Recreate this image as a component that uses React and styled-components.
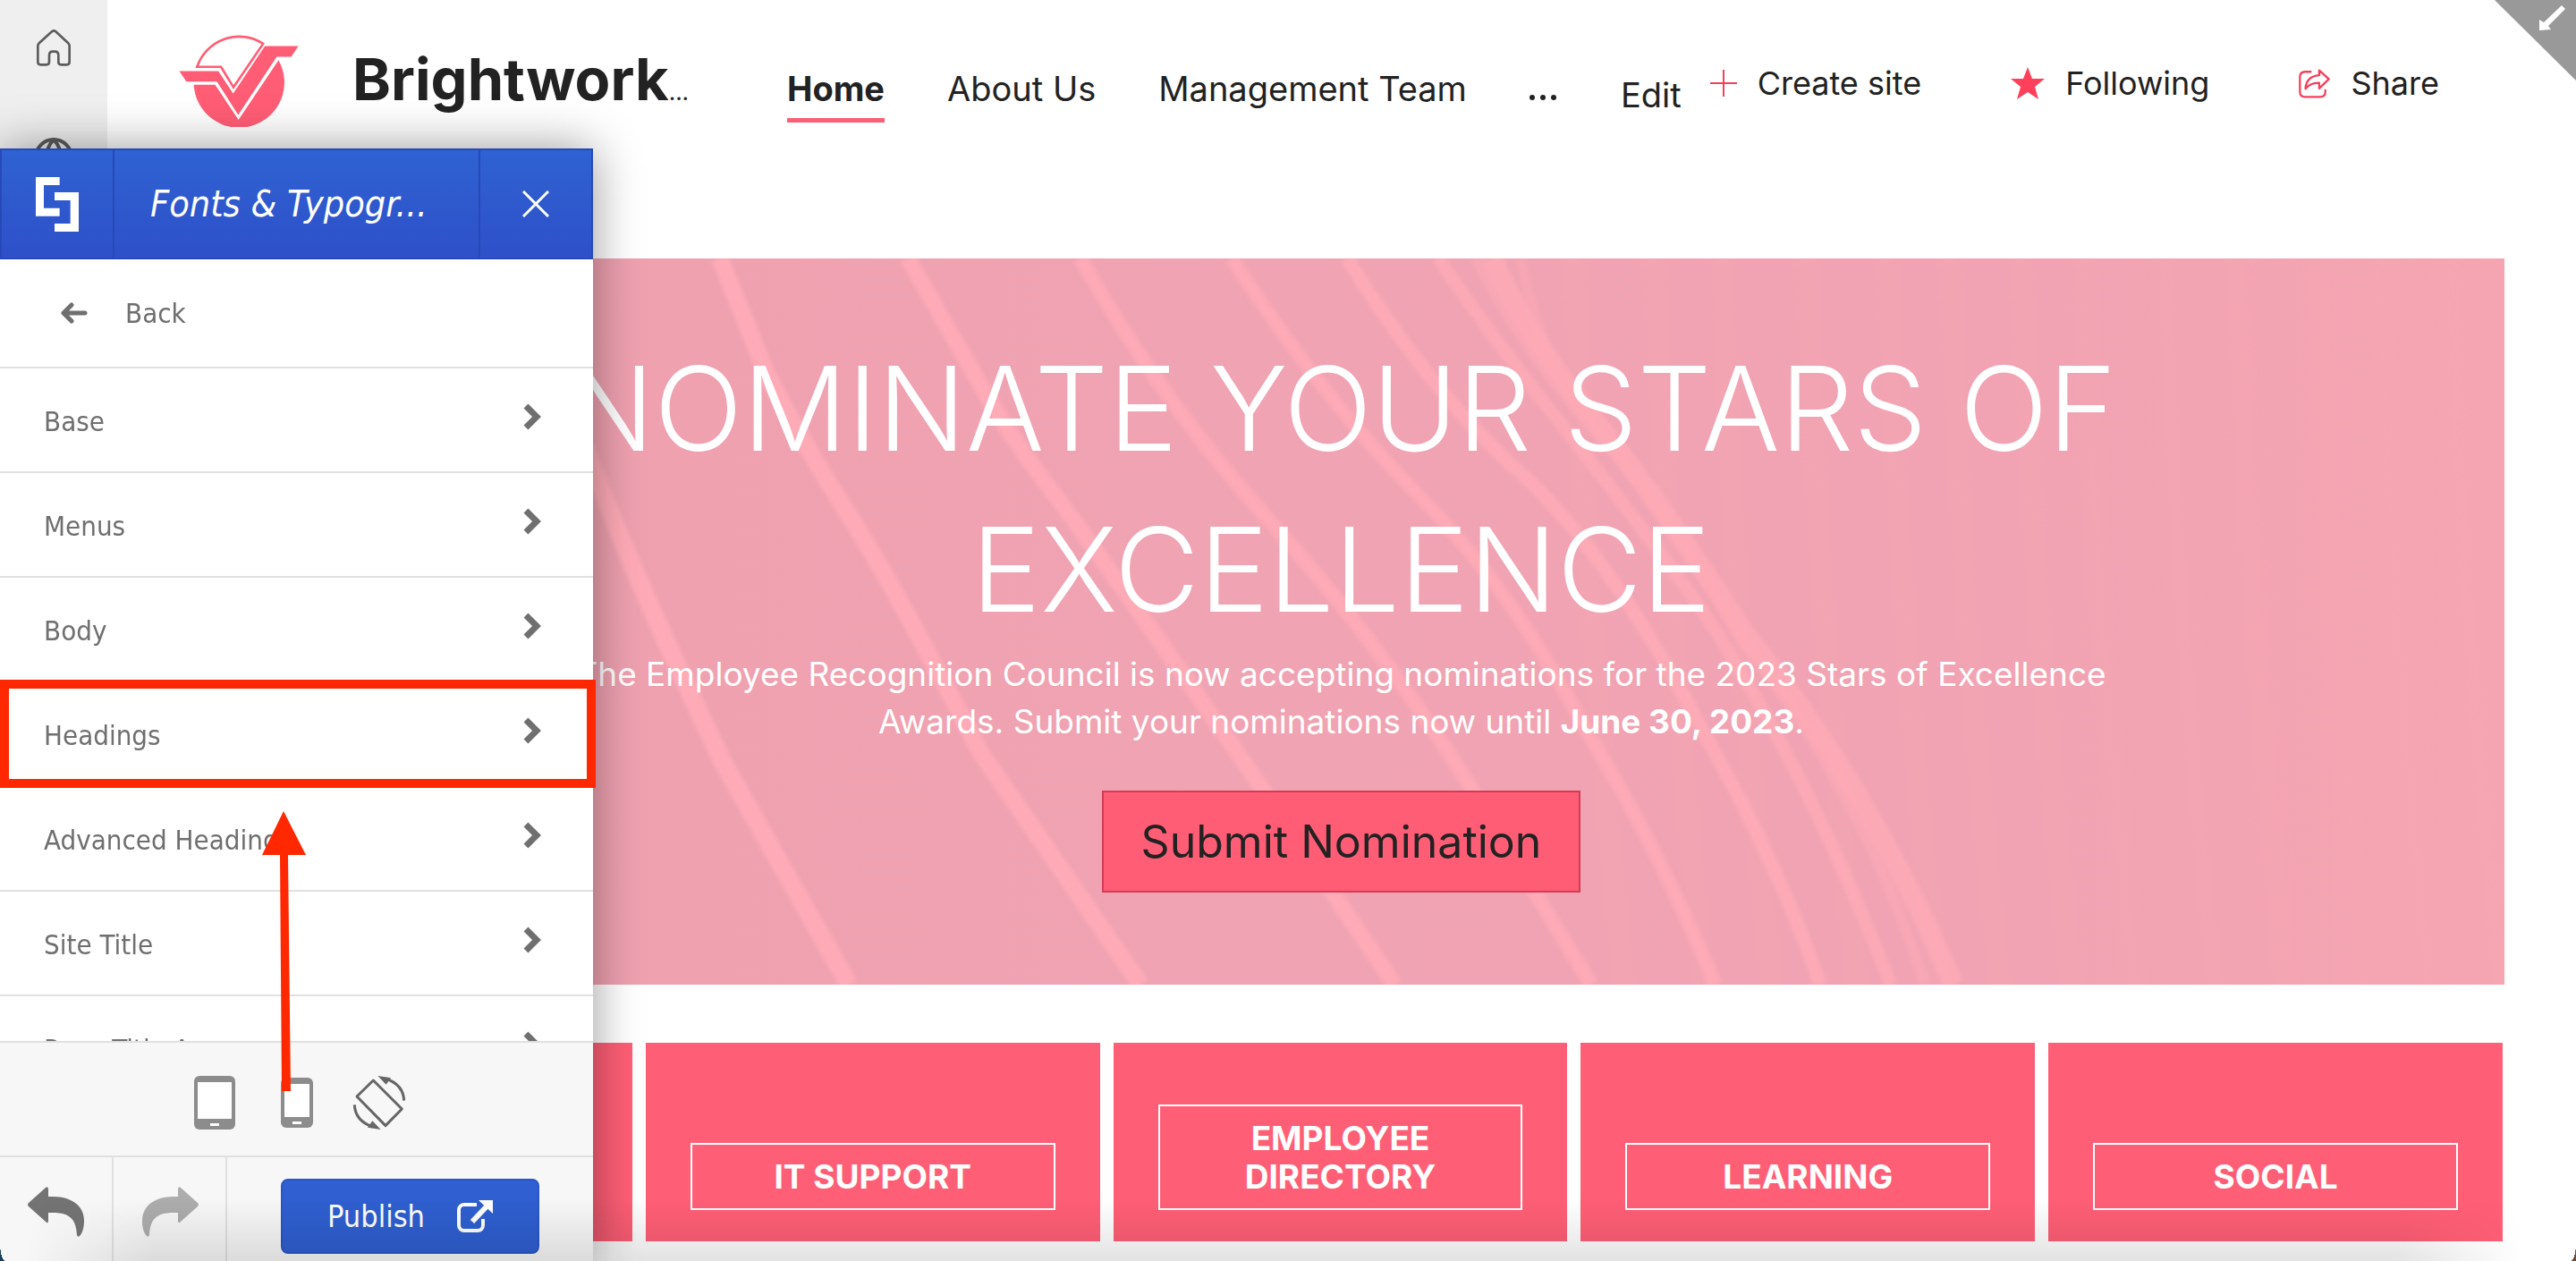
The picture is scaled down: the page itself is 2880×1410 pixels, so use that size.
import React from 'react';
import styled, { createGlobalStyle } from 'styled-components';
import { Globe } from 'lucide-react';

const menuItems = [
    'Base',
    'Menus',
    'Body',
    'Headings',
    'Advanced Headings',
    'Site Title',
    'Page Title Area',
];

const tiles = ['', 'IT Support', 'Employee Directory', 'Learning', 'Social'];

// [path, stroke width, opacity]
const rays = [
    ['M560 230 Q640 470 686 582 T808 852 L949 1101', 20, 1],
    ['M805 289 L857 418 Q900 500 949 576 T1096 841 L1275 1101', 19, 1],
    ['M1015 289 L1089 418 Q1130 490 1173 545 T1412 883 L1559 1101', 18, 0.95],
    ['M1208 289 Q1299 450 1419 582 T1643 878 L1779 1101', 16, 0.9],
    ['M1377 289 Q1482 450 1587 555 T1775 820 Q1850 940 1918 1101', 15, 0.9],
    ['M1506 289 Q1600 440 1700 529 T1911 831 Q1990 970 2035 1101', 15, 0.85],
    ['M1608 289 Q1670 380 1738 465 T1903 682 Q2020 860 2114 1101', 14, 0.8],
    ['M1650 289 Q1700 390 1783 481 T1948 719 Q2080 880 2152 1101', 12, 0.5],
    ['M1668 289 Q1710 380 1783 470 T1948 705 Q2090 880 2184 1101', 22, 0.8],
    ['M1700 289 Q1712 350 1745 430', 12, 0.4],
];

const stripes = [1760, 1850, 1925, 2020, 2110, 2180, 2260, 2330, 2420, 2500, 2590, 2660, 2740];

function BrandLogo() {
    return (
        <svg width="134" height="104" viewBox="600 52 404 314" fill="#ff5d75">
            <path d="M661 163H742L784 232L884 85A149 149 0 0 0 661 163Z" fill="#fff" stroke="#ff5d75" strokeWidth="8" />
            <path d="M601 177H733L783 253L890 93H1003L979 129H930L800 325L728 213H625Z" />
            <path d="M650 223H722L801 342L936 140A153 153 0 1 1 650 223Z" />
        </svg>
    );
}

function HomeIcon() {
    return (
        <svg width="40" height="42" viewBox="117 36 120 126" fill="none" stroke="#5c5c5c" strokeWidth="8">
            <path d="M124 93Q124 89 128 85L171 46Q178 40 184 46L226 85Q230 89 230 93V148Q230 157 221 157H202Q193 157 193 148V126Q193 113 182 113H173Q162 113 162 126V148Q162 157 153 157H133Q124 157 124 148Z" />
        </svg>
    );
}

function PanelLogo() {
    return (
        <svg width="48" height="61" viewBox="123 540 144 183" fill="#fff">
            <path d="M123 540H203V567H150V644H203V671H123Z" />
            <path d="M186 591H267V723H186V696H239V618H186Z" />
        </svg>
    );
}

function ShareIcon() {
    return (
        <svg width="35" height="33" viewBox="95 230 107 101" fill="none" stroke="#f4405b" strokeWidth="7" strokeLinecap="round" strokeLinejoin="round">
            <path d="M136 240H117Q99 240 99 258V308Q99 326 117 326H168Q186 326 186 308V303" />
            <path d="M165 235L198 265L165 297V278Q135 277 118 298Q121 255 165 252Z" />
        </svg>
    );
}

function DeviceIcon({ width, height }) {
    const left = (60 - width) / 2;
    const top = (60 - height) / 2;
    return (
        <svg width="60" height="60" viewBox="0 0 60 60">
            <rect x={left} y={top} width={width} height={height} rx="6" fill="#8c8c8c" />
            <rect x={left + 4} y={top + 7} width={width - 8} height={height - 19} fill="#fff" />
            <rect x="25" y={top + height - 7} width="10" height="3" fill="#fff" />
        </svg>
    );
}

function RotateIcon() {
    return (
        <svg width="60" height="60" viewBox="579 69 180 180" fill="none" stroke="#666" strokeWidth="9" strokeLinejoin="round">
            <path d="M649 84L745 180L690 236L594 138Z" />
            <path d="M690 78Q750 98 752 152" />
            <path d="M648 240Q588 220 586 166" />
            <path d="M664 69L708 76L692 98Z" fill="#666" stroke="none" />
            <path d="M674 249L630 242L646 220Z" fill="#666" stroke="none" />
        </svg>
    );
}

function UndoIcon({ flipped }) {
    return (
        <svg width="64" height="56" viewBox="0 0 64 56" fill="currentColor">
            <path
                transform={flipped ? 'translate(64 0) scale(-1 1)' : undefined}
                d="M1 18L20 1Q23 -1 23 3V11H28C50 11 63 22 63 38C63 46 61 52 58 55Q56 57 55 54C54 37 48 29 28 29H23V38Q23 42 20 39L1 22Q-1 20 1 18Z"
            />
        </svg>
    );
}

function ExternalIcon() {
    return (
        <svg width="40" height="36" viewBox="0 0 40 36" fill="none" stroke="#fff">
            <path d="M22 5H8A6 6 0 0 0 2 11V28A6 6 0 0 0 8 34H23A6 6 0 0 0 29 28V21" strokeWidth="4" />
            <path d="M17 24L34 6" strokeWidth="6" />
            <path d="M24 0H40V15Z" fill="#fff" stroke="none" />
        </svg>
    );
}

function App() {
    return (
        <Page>
            <GlobalStyle />
            <Rail>
                <RailLink href="#home" aria-label="Home"><HomeIcon /></RailLink>
                <RailLink href="#sites" aria-label="Sites"><Globe size={48} strokeWidth={2} /></RailLink>
            </Rail>
            <Main>
                <Header>
                    <Brand>
                        <BrandLogo />
                        <SiteTitle>Brightwork<small>...</small></SiteTitle>
                    </Brand>
                    <Nav>
                        <NavLink href="#home" $active>Home</NavLink>
                        <NavLink href="#about">About Us</NavLink>
                        <NavLink href="#team">Management Team</NavLink>
                        <MoreButton aria-label="More"><i /><i /><i /></MoreButton>
                    </Nav>
                    <EditButton>Edit</EditButton>
                    <Actions>
                        <ActionButton>
                            <svg width="30" height="30" viewBox="0 0 30 30" stroke="#f4405b" strokeWidth="2"><path d="M15 0V30M0 15H30" /></svg>
                            Create site
                        </ActionButton>
                        <ActionButton>
                            <svg width="38" height="36" viewBox="0 0 38 36" fill="#ff405a"><path d="M19 0L24 13L38 13L27 22L31 36L19 28L7 36L11 22L0 13L14 13Z" /></svg>
                            Following
                        </ActionButton>
                        <ActionButton>
                            <ShareIcon />
                            Share
                        </ActionButton>
                    </Actions>
                </Header>
                <Content>
                    <Hero>
                        <HeroArt viewBox="199 289 2601 812" preserveAspectRatio="none" fill="none" aria-hidden="true">
                            <defs>
                                <linearGradient id="heroFill" x1="0" x2="1">
                                    <stop offset="0" stopColor="#ee9fae" />
                                    <stop offset="0.45" stopColor="#f0a3b2" />
                                    <stop offset="0.8" stopColor="#f1a3b3" />
                                    <stop offset="1" stopColor="#f5a5b1" />
                                </linearGradient>
                                <filter id="soft"><feGaussianBlur stdDeviation="2" /></filter>
                                <filter id="softer" x="-300%" width="700%"><feGaussianBlur stdDeviation="9" /></filter>
                            </defs>
                            <rect x="199" y="289" width="2601" height="812" fill="url(#heroFill)" />
                            {stripes.map((x) => (
                                <path key={x} d={`M${x} 260Q${x + 10} 700 ${x + 60} 1140`} stroke="#f8a8b2" strokeWidth="18" opacity="0.35" filter="url(#softer)" />
                            ))}
                            <g stroke="#ffabb7" filter="url(#soft)">
                                {rays.map(([d, width, opacity]) => (
                                    <path key={d} d={d} strokeWidth={width} opacity={opacity} />
                                ))}
                            </g>
                        </HeroArt>
                        <HeroBody>
                            <HeroTitle>NOMINATE YOUR STARS OF EXCELLENCE</HeroTitle>
                            <HeroText>
                                The Employee Recognition Council is now accepting nominations for
                                the 2023 Stars of Excellence Awards. Submit your nominations now
                                until <strong>June 30, 2023</strong>.
                            </HeroText>
                            <HeroButton>Submit Nomination</HeroButton>
                        </HeroBody>
                    </Hero>
                    <Tiles>
                        {tiles.map((tile) => (
                            <Tile key={tile} href="#tile">
                                {tile && <TileLabel>{tile}</TileLabel>}
                            </Tile>
                        ))}
                    </Tiles>
                </Content>
            </Main>
            <CollapseButton aria-label="Collapse">
                <svg width="91" height="90" viewBox="0 0 91 90" fill="#fff">
                    <path d="M0 0H91V90Z" fill="#999" />
                    <path d="M75 6L79 10L60 29L63 33L50 34L50 22L55 25Z" />
                </svg>
            </CollapseButton>
            <Panel>
                <PanelHeader>
                    <PanelMark><PanelLogo /></PanelMark>
                    <PanelTitle>Fonts &amp; Typogr...</PanelTitle>
                    <CloseButton aria-label="Close">
                        <svg width="30" height="30" viewBox="0 0 30 30" stroke="#fff" strokeWidth="3"><path d="M1 1L29 29M29 1L1 29" /></svg>
                    </CloseButton>
                </PanelHeader>
                <BackButton>
                    <svg width="30" height="24" viewBox="0 0 30 24" fill="none" stroke="#6f6f6f" strokeWidth="5" strokeLinecap="round" strokeLinejoin="round"><path d="M27 12H4M12 3L3 12L12 21" /></svg>
                    Back
                </BackButton>
                <MenuList>
                    {menuItems.map((item) => (
                        <MenuRow key={item}>
                            {item}
                            <svg width="20" height="30" viewBox="0 0 20 30" fill="none" stroke="#6f6f6f" strokeWidth="7"><path d="M3 3L15 15L3 27" /></svg>
                        </MenuRow>
                    ))}
                </MenuList>
                <DeviceBar>
                    <IconButton aria-label="Tablet"><DeviceIcon width={46} height={60} /></IconButton>
                    <IconButton aria-label="Phone"><DeviceIcon width={36} height={56} /></IconButton>
                    <IconButton aria-label="Rotate"><RotateIcon /></IconButton>
                </DeviceBar>
                <PanelFooter>
                    <HistoryButton aria-label="Undo"><UndoIcon /></HistoryButton>
                    <HistoryButton aria-label="Redo" $muted><UndoIcon flipped /></HistoryButton>
                    <PublishArea>
                        <PublishButton>Publish <ExternalIcon /></PublishButton>
                    </PublishArea>
                </PanelFooter>
                <Highlight />
                <Pointer width="50" height="314" viewBox="0 0 50 314" fill="#ff2800">
                    <path d="M24 0L49 49L29 49L32 313H22L20 49H0Z" />
                </Pointer>
            </Panel>
            <DockShade />
            <Corner $side="left" />
            <Corner $side="right" />
        </Page>
    );
}

export default App

const GlobalStyle = createGlobalStyle`
*{
    box-sizing: border-box;
}
body{
    margin: 0;
    background: #fff;
    color: #222;
    font-family: Inter, "Liberation Sans", sans-serif;
    font-size: 38px;
}
button{
    font: inherit;
    color: inherit;
    padding: 0;
    border: none;
    background: none;
    cursor: pointer;
}
a{
    color: inherit;
    text-decoration: none;
}
svg{
    display: block;
    flex-shrink: 0;
}
`
const Page = styled.div`
    display: flex;
    min-height: 100vh;
    overflow: hidden;
`
const Rail = styled.aside`
    flex: 0 0 120px;
    display: flex;
    flex-direction: column;
    align-items: center;
    gap: 78px;
    padding-top: 32px;
    background: #efefef;
`
const RailLink = styled.a`
    color: #5c5c5c;
`
const Main = styled.main`
    flex: 1;
    min-width: 0;
`
const Header = styled.header`
    display: flex;
    align-items: center;
    height: 180px;
    margin-bottom: 109px;
    padding: 0 153px 0 80px;
    white-space: nowrap;
`
const Brand = styled.div`
    flex: 0 0 680px;
    display: flex;
    align-items: center;
    gap: 60px;
`
const SiteTitle = styled.h1`
    margin: 0;
    padding-top: 12px;
    font-size: 65px;
    font-weight: 700;
    line-height: 78px;

    small{
        font-size: 26px;
        font-weight: 400;
    }
`
const Nav = styled.nav`
    display: flex;
    gap: 70px;
    padding-top: 32px;
`
const NavLink = styled.a`
    padding-bottom: 10px;
    line-height: 46px;
    font-weight: ${(props) => (props.$active ? 700 : 400)};
    border-bottom: 5px solid ${(props) => (props.$active ? '#f95f76' : 'transparent')};
`
const MoreButton = styled.button`
    display: flex;
    gap: 6px;
    padding-top: 30px;

    i{
        width: 6px;
        height: 6px;
        border-radius: 50%;
        background: #222;
    }
`
const EditButton = styled.button`
    margin: 32px 32px 0 auto;
    line-height: 46px;
`
const Actions = styled.div`
    display: flex;
    gap: 100px;
    padding-top: 6px;
    font-size: 36px;
`
const ActionButton = styled.button`
    display: flex;
    align-items: center;
    gap: 23px;
    line-height: 50px;
`
const Content = styled.div`
    padding: 0 80px 22px 79px;
`
const Hero = styled.section`
    position: relative;
    padding: 78px 0 103px;
    color: #fff;
    text-align: center;
`
const HeroArt = styled.svg`
    position: absolute;
    inset: 0;
    width: 100%;
    height: 100%;
`
const HeroBody = styled.div`
    position: relative;
    max-width: 1800px;
    margin: 0 auto;
`
const HeroTitle = styled.h2`
    margin: 0;
    font-size: 130px;
    font-weight: 300;
    line-height: 180px;
`
const HeroText = styled.p`
    margin: 0 0 51px;
    font-size: 37px;
    line-height: 53px;
`
const HeroButton = styled.button`
    padding: 0 42px;
    border: 2px solid #d43c56;
    background: #ff5d75;
    color: #222;
    font-size: 50px;
    line-height: 110px;
`
const Tiles = styled.div`
    display: grid;
    grid-template-columns: repeat(5, 1fr);
    gap: 15px;
    margin: 65px 2px 0 0;
`
const Tile = styled.a`
    display: flex;
    align-items: flex-end;
    min-height: 222px;
    padding: 35px 50px;
    background: #ff5f76;
`
const TileLabel = styled.span`
    flex: 1;
    padding: 14px 80px;
    border: 2px solid #fff;
    color: #fff;
    font-size: 37px;
    font-weight: 700;
    line-height: 43px;
    text-align: center;
    text-transform: uppercase;
`
const CollapseButton = styled.button`
    position: absolute;
    top: 0;
    right: 0;
`
const Panel = styled.section`
    position: fixed;
    top: 166px;
    bottom: 0;
    left: 0;
    width: 663px;
    display: flex;
    flex-direction: column;
    background: #fff;
    color: #6f6f6f;
    font-family: "DejaVu Sans Condensed", "DejaVu Sans", sans-serif;
    font-size: 31px;
    box-shadow: 0 0 50px rgba(0, 0, 0, 0.4);
`
const PanelHeader = styled.header`
    display: flex;
    height: 124px;
    border: 2px solid #2749b8;
    background: linear-gradient(#2f62d2, #2e50c9);
    color: #fff;
`
const PanelMark = styled.div`
    flex: 0 0 126px;
    display: flex;
    align-items: center;
    justify-content: center;
    border-right: 2px solid #2749b8;
`
const PanelTitle = styled.h2`
    flex: 1;
    margin: 0;
    padding-left: 40px;
    font-size: 41px;
    font-weight: 400;
    font-style: italic;
    line-height: 120px;
    white-space: nowrap;
`
const CloseButton = styled.button`
    flex: 0 0 126px;
    display: flex;
    align-items: center;
    justify-content: center;
    border-left: 2px solid #2749b8;
`
const BackButton = styled.button`
    display: flex;
    align-items: center;
    gap: 42px;
    height: 122px;
    padding: 0 68px;
    border-bottom: 2px solid #e0e0e0;
`
const MenuList = styled.div`
    flex: 1;
    min-height: 0;
    overflow: hidden;
`
const MenuRow = styled.button`
    display: flex;
    align-items: center;
    justify-content: space-between;
    width: 100%;
    height: 117px;
    padding: 2px 58px 0 49px;
    border-bottom: 2px solid #e0e0e0;

    svg{
        margin-bottom: 10px;
    }
`
const DeviceBar = styled.div`
    display: flex;
    align-items: center;
    justify-content: center;
    gap: 32px;
    height: 128px;
    padding-top: 8px;
    border-top: 2px solid #e0e0e0;
    background: #f7f7f7;
`
const IconButton = styled.button`
    display: flex;
`
const PanelFooter = styled.footer`
    display: flex;
    height: 118px;
    border-top: 2px solid #e0e0e0;
    background: #f7f7f7;
`
const HistoryButton = styled.button`
    flex: 0 0 127px;
    display: flex;
    align-items: center;
    justify-content: center;
    padding-top: 6px;
    border-right: 2px solid #e0e0e0;
    color: ${(props) => (props.$muted ? '#adadad' : '#737373')};
`
const PublishArea = styled.div`
    flex: 1;
    padding: 24px 60px 8px;
`
const PublishButton = styled.button`
    display: flex;
    align-items: center;
    justify-content: center;
    gap: 36px;
    width: 100%;
    height: 84px;
    border: 2px solid #2b56c4;
    border-radius: 8px;
    background: #2f5fd0;
    color: #fff;
    font-size: 34px;
`
const Highlight = styled.div`
    position: absolute;
    top: 594px;
    left: 0;
    right: -3px;
    height: 121px;
    border: 10px solid #ff2800;
`
const Pointer = styled.svg`
    position: absolute;
    top: 741px;
    left: 293px;
`
const DockShade = styled.div`
    position: fixed;
    left: 0;
    right: 0;
    bottom: 0;
    height: 70px;
    background: linear-gradient(transparent, rgba(0, 0, 0, 0.11));
    mask-image: linear-gradient(90deg, transparent 1%, #000 6%, #000 93%, transparent 98%);
    pointer-events: none;
`
const Corner = styled.div`
    position: fixed;
    bottom: 0;
    ${(props) => props.$side}: 0;
    width: 6px;
    height: 20px;
    background: radial-gradient(
        ellipse 100% 100% at top ${(props) => (props.$side === 'left' ? 'right' : 'left')},
        transparent 98%,
        ${(props) => (props.$side === 'left' ? '#16405c' : '#6b4a3a')}
    );
`
